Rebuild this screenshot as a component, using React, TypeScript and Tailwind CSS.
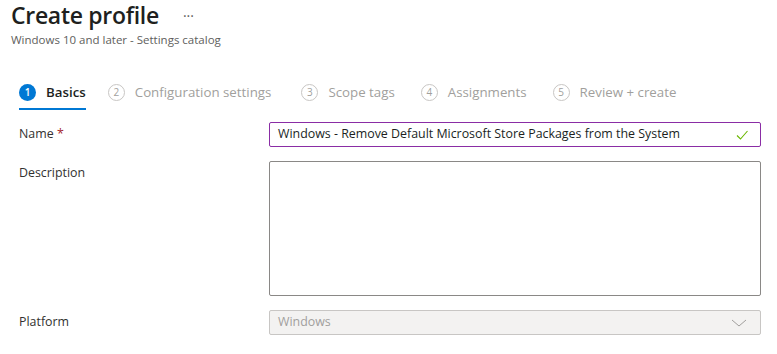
import React from 'react';

const steps = [
  { n: 1, label: 'Basics', active: true, gap: 'mr-[22px]' },
  { n: 2, label: 'Configuration settings', gap: 'mr-[30px]' },
  { n: 3, label: 'Scope tags', gap: 'mr-[26px]' },
  { n: 4, label: 'Assignments', gap: 'mr-[26px]' },
  { n: 5, label: 'Review + create', gap: 'mr-[0px]' },
];

const font = { fontFamily: '"Open Sans", "Noto Sans", sans-serif' };

const App = () => {
  return (
    <div className="w-[777px] h-[354px] bg-white overflow-hidden text-[#323130]" style={font}>
      {/* Header */}
      <div className="pl-[11px]">
        <div className="flex items-center">
          <h1 className="text-[23px] leading-[30px] font-semibold text-[#201f1e] tracking-[-0.3px]">Create profile</h1>
          <span className="ml-[24px] text-[14px] text-[#605e5c] leading-none mt-[1px]">···</span>
        </div>
        <p className="text-[11.5px] leading-[16px] text-[#605e5c] mt-[2px]">Windows 10 and later - Settings catalog</p>
      </div>

      {/* Steps */}
      <div className="flex pl-[19px] mt-[29px] h-[33px]">
        {steps.map((s) => (
          <div
            key={s.n}
            className={`flex items-center h-full ${s.gap} border-b-2 ${s.active ? 'border-[#0078d4]' : 'border-transparent'}`}
          >
            <span
              className={`w-[17px] h-[17px] rounded-full flex items-center justify-center text-[10px] ${
                s.active ? 'bg-[#0078d4] text-white font-semibold' : 'border border-[#c8c6c4] text-[#a19f9d]'
              }`}
            >
              {s.n}
            </span>
            <span
              className={`ml-[10px] text-[13.3px] ${s.active ? 'font-semibold text-[#201f1e]' : 'text-[#a19f9d]'}`}
            >
              {s.label}
            </span>
          </div>
        ))}
      </div>

      {/* Form */}
      <div className="pl-[19px] pr-[16px] mt-[12px] text-[12.4px]">
        <div className="flex items-center">
          <label className="w-[250px] text-[#323130]">
            Name <span className="text-[#a4262c]">*</span>
          </label>
          <div className="flex-1 h-[25px] border border-[#8a2da5] rounded-[2px] flex items-center px-[8px]">
            <span className="flex-1 text-[#201f1e] whitespace-nowrap">
              Windows - Remove Default Microsoft Store Packages from the System
            </span>
            <svg width="14" height="14" viewBox="0 0 14 14" className="mr-[3px]">
              <path d="M2 7.5 L5.5 11 L12.5 3" fill="none" stroke="#6bb700" strokeWidth="1.1" />
            </svg>
          </div>
        </div>

        <div className="flex mt-[14px]">
          <label className="w-[250px] pt-[3px] text-[#323130]">Description</label>
          <div className="flex-1 h-[135px] border border-[#8a8886] rounded-[2px]" />
        </div>

        <div className="flex items-center mt-[14px]">
          <label className="w-[250px] text-[#323130]">Platform</label>
          <div className="flex-1 h-[25px] border border-[#c8c6c4] bg-[#f3f2f1] rounded-[2px] flex items-center px-[8px]">
            <span className="flex-1 text-[#a19f9d]">Windows</span>
            <svg width="16" height="10" viewBox="0 0 16 10" className="mr-[5px]">
              <path d="M1 2 L8 8 L15 2" fill="none" stroke="#a19f9d" strokeWidth="1" />
            </svg>
          </div>
        </div>
      </div>
    </div>
  );
};

export default App;
